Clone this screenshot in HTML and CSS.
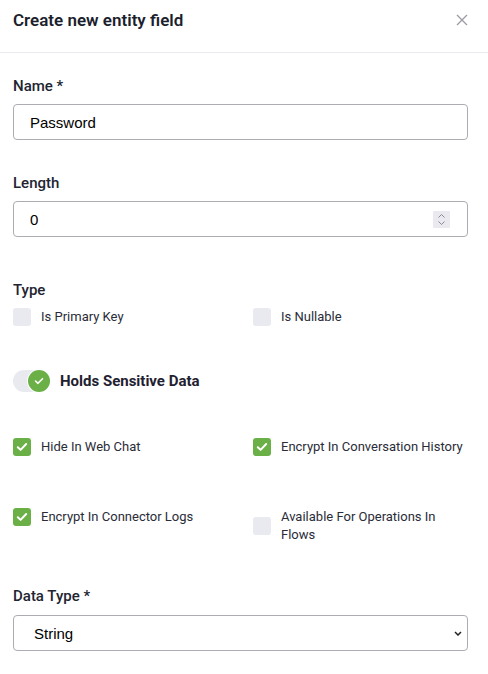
FILE: index.html
```
<!DOCTYPE html>
<html>
<head>
<meta charset="utf-8">
<link rel="stylesheet" href="styles.css">
</head>
<body>
<div class="modal">
  <div class="header">
    <div class="title">Create new entity field</div>
    <svg class="close" width="12" height="12" viewBox="0 0 12 12"><path d="M1 1L11 11M11 1L1 11" stroke="#9b9ba6" stroke-width="1.3" fill="none"/></svg>
  </div>
  <div class="body">
    <div class="label lbl-name">Name *</div>
    <div class="field"><span class="value">Password</span></div>

    <div class="label lbl-length">Length</div>
    <div class="field"><span class="value">0</span>
      <span class="spinner"><svg width="9" height="13" viewBox="0 0 9 13"><path d="M1.5 4.5L4.5 1.5L7.5 4.5M1.5 8.5L4.5 11.5L7.5 8.5" stroke="#8a8a94" stroke-width="1" fill="none"/></svg></span>
    </div>

    <div class="label lbl-type">Type</div>
    <div class="grid grid-type">
      <div class="check"><span class="box"></span><span class="ctext">Is Primary Key</span></div>
      <div class="check"><span class="box"></span><span class="ctext">Is Nullable</span></div>
    </div>

    <div class="toggle-row">
      <span class="track"><span class="knob"><svg width="10" height="8" viewBox="0 0 10 8"><path d="M1.5 4L4 6.3L8.5 1.7" stroke="#fff" stroke-width="1.6" fill="none" stroke-linecap="round" stroke-linejoin="round"/></svg></span></span>
      <span class="toggle-label">Holds Sensitive Data</span>
    </div>

    <div class="grid grid-sens">
      <div class="check"><span class="box on"><svg width="12" height="10" viewBox="0 0 12 10"><path d="M1.8 5.2L4.6 7.9L10.2 2" stroke="#fff" stroke-width="2" fill="none" stroke-linecap="round" stroke-linejoin="round"/></svg></span><span class="ctext">Hide In Web Chat</span></div>
      <div class="check"><span class="box on"><svg width="12" height="10" viewBox="0 0 12 10"><path d="M1.8 5.2L4.6 7.9L10.2 2" stroke="#fff" stroke-width="2" fill="none" stroke-linecap="round" stroke-linejoin="round"/></svg></span><span class="ctext">Encrypt In Conversation History</span></div>
      <div class="check"><span class="box on"><svg width="12" height="10" viewBox="0 0 12 10"><path d="M1.8 5.2L4.6 7.9L10.2 2" stroke="#fff" stroke-width="2" fill="none" stroke-linecap="round" stroke-linejoin="round"/></svg></span><span class="ctext">Encrypt In Connector Logs</span></div>
      <div class="check"><span class="box"></span><span class="ctext">Available For Operations In Flows</span></div>
    </div>

    <div class="label lbl-data">Data Type *</div>
    <div class="field select"><span class="value">String</span>
      <svg class="chev" width="8" height="5" viewBox="0 0 8 5"><path d="M1 1L4 4L7 1" stroke="#222" stroke-width="1.5" fill="none"/></svg>
    </div>
  </div>
</div>
</body>
</html>
```
FILE: styles.css
```
* { box-sizing: border-box; }
html, body { margin: 0; padding: 0; background: #fff; }
body { font-family: Roboto, "Noto Sans", sans-serif; color: #1f2130; }
.modal { width: 488px; }
.header {
  display: flex; justify-content: space-between; align-items: center;
  height: 53px; padding: 10px 20px 22px 13px;
  border-bottom: 1px solid #e9e9ef;
}
.title { font-size: 17px; font-weight: 600; line-height: 20px; color: #1c1f2e; }
.body { padding: 0 20px 0 13px; display: flex; flex-direction: column; }
.label { font-size: 15px; font-weight: 500; line-height: 20px; color: #222431; margin-bottom: 8px; }
.lbl-name { margin-top: 23px; }
.lbl-length { margin-top: 33px; }
.lbl-type { margin-top: 43px; }
.lbl-data { margin-top: 42px; margin-bottom: 9px; }
.field {
  height: 36px; border: 1px solid #acacb2; border-radius: 4px;
  display: flex; align-items: center; padding: 0 17px 0 16px;
}
.value { font-size: 15px; color: #000; flex: 1; font-family: "Liberation Sans", Arial, sans-serif; }
.spinner {
  width: 17px; height: 17px; background: #e9e9ef; border-radius: 1px;
  display: flex; align-items: center; justify-content: center;
}
.select { padding-left: 20px; padding-right: 5px; }
.grid { display: grid; grid-template-columns: 215px 215px; column-gap: 25px; align-items: start; }
.grid-sens { row-gap: 52px; margin-top: 45px; }
.check { display: flex; align-items: center; gap: 10px; }
.box {
  flex: none; width: 18px; height: 18px; border-radius: 3px; background: #e9eaf0;
  display: flex; align-items: center; justify-content: center;
}
.box.on { background: #6ab047; }
.ctext { font-size: 13px; line-height: 18px; color: #2a2c38; }
.toggle-row { display: flex; align-items: center; margin-top: 43px; height: 24px; }
.track {
  width: 37px; height: 22px; border-radius: 11px; background: #e9eaf0;
  display: flex; align-items: center; justify-content: flex-end;
}
.knob {
  width: 22px; height: 22px; border-radius: 50%; background: #6ab047;
  display: flex; align-items: center; justify-content: center;
  box-shadow: 0 0 0 1px #fff;
}
.toggle-label { margin-left: 10px; font-size: 15px; font-weight: 700; color: #1f2130; }
```
